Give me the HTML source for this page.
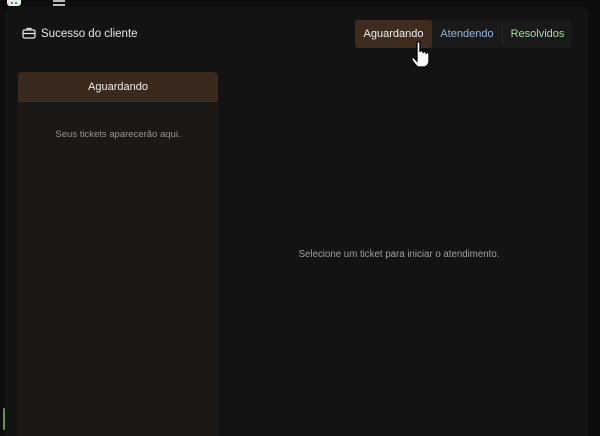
<!DOCTYPE html>
<html><head><meta charset="utf-8"><style>
*{margin:0;padding:0;box-sizing:border-box}
html,body{width:600px;height:436px}
body{background:#0d0d0d;font-family:"Liberation Sans","DejaVu Sans",sans-serif;position:relative;overflow:hidden}
.main{position:absolute;left:5px;top:7px;width:583px;height:429px;background:#131313;border-radius:6px 6px 0 0}
.title{position:absolute;left:41px;top:27px;color:#e8e8e8;font-size:11.5px;line-height:14px}
.tabs{position:absolute;left:355px;top:20px;width:217px;height:28px;background:#1a1a1a;border-radius:3px;font-size:11px}
.tab{position:absolute;top:0;height:28px;line-height:28px;text-align:center}
.list{position:absolute;left:18px;top:72px;width:200px;height:364px;background:#1c1815;border-radius:4px 4px 0 0;overflow:hidden}
.lh{height:30px;background:#3a2a1d;color:#eee;font-size:11px;text-align:center;line-height:31px}
.empty{color:#9a948d;font-size:9.5px;text-align:center;margin-top:27px}
.center{position:absolute;left:208px;width:382px;top:249px;text-align:center;color:#a0a0a0;font-size:9.7px}
</style></head><body>
<div style="position:absolute;left:7px;top:0;width:14px;height:6px;background:#eee;border-radius:0 0 3px 3px"></div>
<div style="position:absolute;left:11px;top:2px;width:2px;height:2px;background:#2a2"></div>
<div style="position:absolute;left:15px;top:2px;width:2px;height:2px;background:#2a2"></div>
<div style="position:absolute;left:53px;top:0;width:12px;height:2px;background:#bbb"></div>
<div style="position:absolute;left:53px;top:4px;width:12px;height:2px;background:#bbb"></div>
<div class="main"></div>
<div style="position:absolute;left:3px;top:408px;width:2px;height:22px;background:#5a9a4a;border-radius:1px"></div>
<svg style="position:absolute;left:22px;top:27px" width="14" height="12" viewBox="0 0 14 12" fill="none" stroke="#e8e8e8" stroke-width="1.2"><rect x="1" y="3" width="12" height="8" rx="1.5"/><path d="M5 3V1.5h4V3M1 6.5h12"/></svg>
<div class="title">Sucesso do cliente</div>
<div class="tabs">
<div class="tab" style="left:0;width:77px;background:#3e2c1f;color:#f0f0f0;border-radius:3px">Aguardando</div>
<div class="tab" style="left:77px;width:70px;color:#8fb8e0">Atendendo</div>
<div style="position:absolute;left:147px;top:4px;width:1px;height:20px;background:#252525"></div>
<div class="tab" style="left:148px;width:69px;color:#a8dca0">Resolvidos</div>
</div>
<svg style="position:absolute;left:408px;top:40px" width="30" height="30" viewBox="0 0 28 30"><path d="M8 3c0-2 3-2 3 0v9c0-2 3-2 3 0v1c0-2 3-2 3 0v1c0-2 3-2 3 0v7c0 3-2 5-4 6h-7c-2-1-4-4-6-7-1-2 1-3 2-2l3 3V3z" fill="#fff" stroke="#000" stroke-width="1.3"/></svg>
<div class="list"><div class="lh">Aguardando</div><div class="empty">Seus tickets aparecerão aqui.</div></div>
<div class="center">Selecione um ticket para iniciar o atendimento.</div>
</body></html>
